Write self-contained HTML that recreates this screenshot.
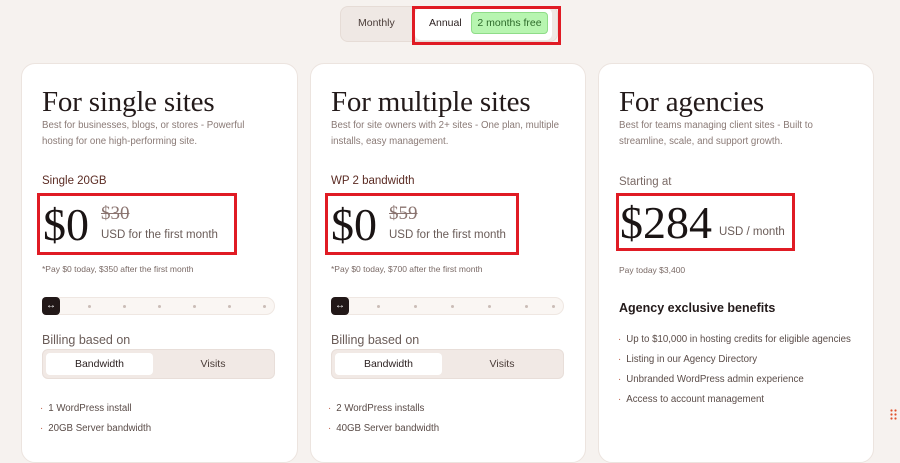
<!DOCTYPE html>
<html><head><style>
*{box-sizing:border-box;margin:0;padding:0}
body{width:900px;height:436px;overflow:hidden;background:#f6f2ef;font-family:"Liberation Sans",sans-serif;position:relative;color:#2a1f1f}
.abs{position:absolute}
.toggle{left:340px;top:6px;width:218px;height:36px;background:#efe8e4;border:1px solid #e6dcd6;border-radius:8px}
.red{border:3px solid #e01b24}
.card{top:63px;height:400px;background:#fff;border:1px solid #ece4df;border-radius:14px}
h2{position:absolute;top:86px;font-family:"Liberation Serif",serif;font-weight:normal;font-size:29px;color:#231a1a;letter-spacing:-.2px}
.desc{position:absolute;top:118px;font-size:9.7px;line-height:15.5px;color:#8a7a76}
.plan{position:absolute;top:175px;font-size:11.5px;color:#5b2b23}
.big{font-family:"Liberation Serif",serif;font-size:46px;color:#1a1414;position:absolute}
.strike{position:absolute;font-family:"Liberation Serif",serif;font-size:19px;color:#8a7470;text-decoration:line-through}
.usd{position:absolute;font-size:11.5px;color:#6a5c58}
.note{position:absolute;top:264px;font-size:8.5px;color:#7a6a66}
.slider{position:absolute;top:297px;width:233px;height:18px;background:#faf6f3;border:1px solid #efe7e2;border-radius:9px}
.knob{position:absolute;left:-1px;top:-1px;width:18px;height:18px;background:#221818;border-radius:4px;color:#fff;font-size:10px;text-align:center;line-height:18px}
.dot{position:absolute;top:7px;width:3px;height:3px;border-radius:50%;background:#cbbdb7}
.bill{position:absolute;top:333px;font-size:12.5px;color:#6a5c58}
.seg{position:absolute;top:349px;width:233px;height:30px;background:#f1e9e5;border:1px solid #e8ded9;border-radius:6px}
.seg .on{position:absolute;left:3px;top:3px;width:107px;height:22px;background:#fff;border-radius:4px;font-size:10.5px;text-align:center;line-height:22px;color:#2a1f1f}
.seg .off{position:absolute;left:115px;top:3px;width:110px;line-height:22px;text-align:center;font-size:10.5px;color:#4a3c38}
ul{position:absolute;list-style:none;font-size:9.7px;color:#5a4c48}
li{height:20px}
li:before{content:"·";color:#c06048;margin-right:5px}
</style></head><body>
<div class="abs toggle">
 <span class="abs" style="left:17px;top:10px;font-size:10.5px;color:#4a3c38">Monthly</span>
 <div class="abs" style="left:74px;top:1px;width:137px;height:32px;background:#fff;border-radius:6px"></div>
 <span class="abs" style="left:88px;top:10px;font-size:10.5px;color:#2a1f1f">Annual</span>
 <span class="abs" style="left:130px;top:5px;width:77px;height:22px;background:#b7f5b0;border:1px solid #8fdc88;border-radius:4px;font-size:10.5px;color:#2d6a2a;text-align:center;line-height:20px">2 months free</span>
</div>
<div class="abs red" style="left:412px;top:6px;width:149px;height:39px"></div>

<div class="abs card" style="left:21px;width:277px"></div>
<div class="abs card" style="left:310px;width:276px"></div>
<div class="abs card" style="left:598px;width:276px"></div>

<!-- card1 -->
<h2 style="left:42px">For single sites</h2>
<div class="desc" style="left:42px">Best for businesses, blogs, or stores - Powerful<br>hosting for one high-performing site.</div>
<div class="plan" style="left:42px">Single 20GB</div>
<div class="big" style="left:43px;top:198px">$0</div>
<div class="strike" style="left:101px;top:203px">$30</div>
<div class="usd" style="left:101px;top:229px">USD for the first month</div>
<div class="abs red" style="left:37px;top:193px;width:200px;height:62px"></div>
<div class="note" style="left:42px">*Pay $0 today, $350 after the first month</div>
<div class="slider" style="left:42px"><div class="knob">↔</div><div class="dot" style="left:45px"></div><div class="dot" style="left:80px"></div><div class="dot" style="left:115px"></div><div class="dot" style="left:150px"></div><div class="dot" style="left:185px"></div><div class="dot" style="left:220px"></div></div>
<div class="bill" style="left:42px">Billing based on</div>
<div class="seg" style="left:42px"><div class="on">Bandwidth</div><div class="off">Visits</div></div>
<ul style="left:40px;top:403px"><li>1 WordPress install</li><li>20GB Server bandwidth</li></ul>

<!-- card2 -->
<h2 style="left:331px">For multiple sites</h2>
<div class="desc" style="left:331px">Best for site owners with 2+ sites - One plan, multiple<br>installs, easy management.</div>
<div class="plan" style="left:331px">WP 2 bandwidth</div>
<div class="big" style="left:331px;top:198px">$0</div>
<div class="strike" style="left:389px;top:203px">$59</div>
<div class="usd" style="left:389px;top:229px">USD for the first month</div>
<div class="abs red" style="left:325px;top:193px;width:194px;height:62px"></div>
<div class="note" style="left:331px">*Pay $0 today, $700 after the first month</div>
<div class="slider" style="left:331px"><div class="knob">↔</div><div class="dot" style="left:45px"></div><div class="dot" style="left:82px"></div><div class="dot" style="left:119px"></div><div class="dot" style="left:156px"></div><div class="dot" style="left:193px"></div><div class="dot" style="left:220px"></div></div>
<div class="bill" style="left:331px">Billing based on</div>
<div class="seg" style="left:331px"><div class="on">Bandwidth</div><div class="off">Visits</div></div>
<ul style="left:328px;top:403px"><li>2 WordPress installs</li><li>40GB Server bandwidth</li></ul>

<!-- card3 -->
<h2 style="left:619px">For agencies</h2>
<div class="desc" style="left:619px">Best for teams managing client sites - Built to<br>streamline, scale, and support growth.</div>
<div class="abs" style="left:619px;top:176px;font-size:11.5px;color:#7a6a66">Starting at</div>
<div class="big" style="left:620px;top:196px">$284</div>
<div class="usd" style="left:719px;top:226px">USD / month</div>
<div class="abs red" style="left:616px;top:193px;width:179px;height:58px"></div>
<div class="abs" style="left:619px;top:265px;font-size:8.5px;color:#7a6a66">Pay today $3,400</div>
<div class="abs" style="left:619px;top:301px;font-size:12.5px;font-weight:bold;color:#231a1a">Agency exclusive benefits</div>
<ul style="left:618px;top:334px"><li>Up to $10,000 in hosting credits for eligible agencies</li><li>Listing in our Agency Directory</li><li>Unbranded WordPress admin experience</li><li>Access to account management</li></ul>
<div class="abs" style="left:890px;top:409px;width:8px;font-size:0">
<svg width="8" height="14"><g fill="#e0502a"><circle cx="1.5" cy="1.5" r="1.1"/><circle cx="5.5" cy="1.5" r="1.1"/><circle cx="1.5" cy="5.5" r="1.1"/><circle cx="5.5" cy="5.5" r="1.1"/><circle cx="1.5" cy="9.5" r="1.1"/><circle cx="5.5" cy="9.5" r="1.1"/></g></svg></div>
</body></html>
